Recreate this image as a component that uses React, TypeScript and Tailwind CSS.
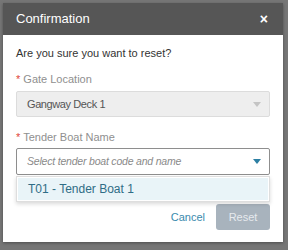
const Caret = ({ className }: { className: string }) => (
  <svg width="8" height="5" viewBox="0 0 8 5" className={className}>
    <path d="M0 0 L8 0 L4 5 Z" fill="currentColor" />
  </svg>
);

const Label = ({ text }: { text: string }) => (
  <div className="text-[11px] leading-[12px] text-[#8f8f8f]">
    <span className="text-[#e0443a]">* </span>
    {text}
  </div>
);

const App = () => {
  return (
    <div
      className="w-[288px] h-[250px] bg-[#767676] pt-[3px] pl-[3px]"
      style={{ fontFamily: '"Liberation Sans", Arial, sans-serif' }}
    >
      <div className="w-[280px] h-[239px] bg-white shadow-[0_1px_3px_rgba(0,0,0,0.35)]">
        <div className="h-[32px] bg-[#565656] flex items-center justify-between pl-[13px] pr-[15px]">
          <span className="text-[13px] text-white">Confirmation</span>
          <span className="text-[14px] font-bold text-white leading-none">×</span>
        </div>

        <div className="px-[13px] pt-[11px] pb-[12px]">
          <p className="text-[11px] leading-[14px] text-[#333]">Are you sure you want to reset?</p>

          <div className="mt-[13px]">
            <Label text="Gate Location" />
            <div className="mt-[6px] h-[26px] bg-[#eeeeee] border border-[#dcdcdc] rounded-[2px] flex items-center justify-between pl-[10px] pr-[8px]">
              <span className="text-[11px] tracking-[-0.4px] text-[#555]">Gangway Deck 1</span>
              <Caret className="text-[#c4c4c4]" />
            </div>
          </div>

          <div className="mt-[14px] relative">
            <Label text="Tender Boat Name" />
            <div className="mt-[5px] h-[27px] bg-white border border-[#8e8e8e] rounded-[2px] flex items-center justify-between pl-[10px] pr-[8px]">
              <span className="text-[10.5px] tracking-[-0.2px] italic text-[#8a8a8a]">Select tender boat code and name</span>
              <Caret className="text-[#2d7fa3]" />
            </div>
            <div className="absolute left-0 right-0 top-[45px] bg-white border border-[#dedede] shadow-[0_2px_4px_rgba(0,0,0,0.15)] p-px">
              <div className="h-[22px] bg-[#e9f4f8] flex items-center pl-[10px] text-[12px] text-[#2f6d86]">
                T01 - Tender Boat 1
              </div>
            </div>
          </div>

          <div className="mt-[29px] flex items-center justify-end gap-[11px]">
            <span className="text-[11px] text-[#3a8aad]">Cancel</span>
            <div className="w-[54px] h-[26px] rounded-[3px] bg-[#a8b3bd] flex items-center justify-center text-[11px] text-[#e6eaee]">
              Reset
            </div>
          </div>
        </div>
      </div>
    </div>
  );
};

export default App;
